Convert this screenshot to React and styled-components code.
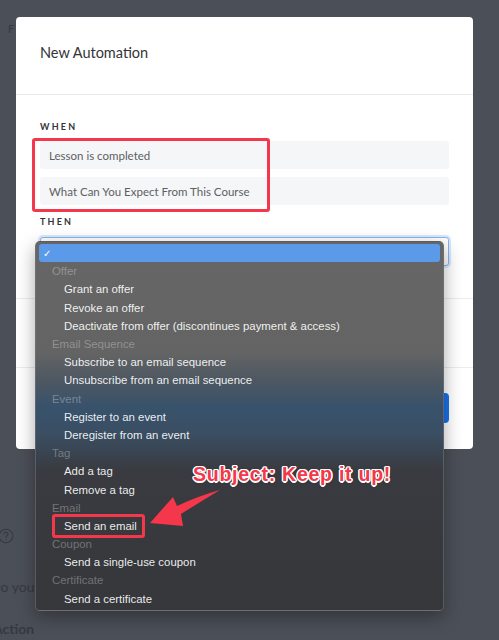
import styled, { createGlobalStyle } from 'styled-components';

const GlobalStyle = createGlobalStyle`
	html, body {
		margin: 0;
		padding: 0;
		background: #4b4f57;
	}
	* {
		box-sizing: border-box;
	}
`;

const Page = styled.div`
	position: relative;
	width: 499px;
	height: 640px;
	overflow: hidden;
	background: #4b4f57;
	font-family: 'Lato', 'Open Sans', sans-serif;
`;

// the course page behind the dimmed overlay
const BackdropPage = styled.div`
	display: flex;
	flex-direction: column;
	padding: 22px 0 0 8px;
	color: #363940;
`;

const BackdropTitle = styled.div`
	font-size: 11px;
	height: 14px;
`;

const HelpRow = styled.div`
	margin-top: 492px;
	margin-left: -10px;
	height: 16px;
`;

const BackdropText = styled.div`
	margin-top: 34px;
	margin-left: -18px;
	font-size: 14px;
	line-height: 18px;
`;

const BackdropHeading = styled.div`
	margin-top: 24px;
	margin-left: -15px;
	font-size: 14px;
	font-weight: 700;
`;

const Modal = styled.div`
	position: absolute;
	left: 16px;
	top: 17px;
	width: 457px;
	height: 432px;
	background: #ffffff;
	border-radius: 4px;
	display: flex;
	flex-direction: column;
	overflow: hidden;
`;

const ModalHeader = styled.div`
	height: 78px;
	padding: 26px 24px 0;
	border-bottom: 1px solid #e9e9ec;
`;

const ModalTitle = styled.h2`
	margin: 0;
	font-size: 14.5px;
	line-height: 20px;
	font-weight: 400;
	color: #333438;
`;

const ModalBody = styled.div`
	display: flex;
	flex-direction: column;
	padding: 26px 24px 32px;
	border-bottom: 1px solid #ececef;
`;

const FieldLabel = styled.div`
	font-size: 9px;
	line-height: 11px;
	font-weight: 700;
	letter-spacing: 2.2px;
	color: #333438;
	margin-bottom: ${(p) => p.$gap || 9}px;
	margin-top: ${(p) => p.$top || 0}px;
`;

const FieldBox = styled.div`
	height: 28px;
	background: #f5f6f8;
	border-radius: 3px;
	padding: 0 9px;
	display: flex;
	align-items: center;
	font-size: 11.5px;
	color: #5d5f63;
	margin-bottom: 8px;
`;

const SelectBox = styled.div`
	height: 29px;
	border: 1px solid #86b4f5;
	box-shadow: 0 0 0 2px #dbe8fc;
	border-radius: 3px;
	background: #ffffff;
`;

const ModalSection = styled.div`
	height: 69px;
	border-bottom: 1px solid #ececef;
`;

const ModalFooter = styled.div`
	display: flex;
	justify-content: flex-end;
	padding: 25px 24px;
`;

const PrimaryButton = styled.button`
	width: 96px;
	height: 30px;
	border: none;
	border-radius: 4px;
	background: #1a72ea;
	color: #fff;
	font-family: inherit;
	font-size: 12px;
`;

const Menu = styled.div`
	position: absolute;
	left: 35px;
	top: 241px;
	width: 409px;
	height: 370px;
	padding: 2px 3px 3px;
	border-radius: 5px;
	border: 1px solid rgba(120, 120, 125, 0.55);
	box-shadow: 0 6px 18px rgba(0, 0, 0, 0.35);
	background: linear-gradient(
		180deg,
		#666666 0%,
		#646464 30%,
		#4c5762 38%,
		#38526c 45%,
		#3a4e63 52%,
		#393b40 62%,
		#36373b 100%
	);
	font-family: 'Liberation Sans', Arial, sans-serif;
	font-size: 11.4px;
`;

const MenuRow = styled.div`
	height: 18.2px;
	display: flex;
	align-items: center;
	border-radius: 3px;
	padding-left: ${(p) => (p.$kind === 'item' ? 25 : p.$kind === 'group' ? 13 : 4)}px;
	color: ${(p) => (p.$kind === 'group' ? 'rgba(255,255,255,0.3)' : 'rgba(255,255,255,0.92)')};
	background: ${(p) => (p.$active ? '#5a9ae9' : 'transparent')};
	white-space: nowrap;
`;

const Check = styled.span`
	font-size: 10px;
	color: #fff;
`;

const HighlightBox = styled.div`
	position: absolute;
	left: ${(p) => p.$x}px;
	top: ${(p) => p.$y}px;
	width: ${(p) => p.$w}px;
	height: ${(p) => p.$h}px;
	border: 3px solid #f4374a;
	border-radius: 3px;
`;

const ArrowMark = styled.svg`
	position: absolute;
	left: 140px;
	top: 480px;
	overflow: visible;
`;

const Callout = styled.div`
	position: absolute;
	left: 193px;
	top: 463px;
	font-family: 'Liberation Sans', Arial, sans-serif;
	font-weight: 700;
	font-size: 19.5px;
	letter-spacing: 0.75px;
	color: #f4374a;
	white-space: nowrap;
	text-shadow: 1.5px 0 0 #fff, -1.5px 0 0 #fff, 0 1.5px 0 #fff, 0 -1.5px 0 #fff,
		1px 1px 0 #fff, -1px -1px 0 #fff, 1px -1px 0 #fff, -1px 1px 0 #fff,
		0 1px 3px rgba(0, 0, 0, 0.5);
`;

const menuGroups = [
	{ label: 'Offer', items: ['Grant an offer', 'Revoke an offer', 'Deactivate from offer (discontinues payment & access)'] },
	{ label: 'Email Sequence', items: ['Subscribe to an email sequence', 'Unsubscribe from an email sequence'] },
	{ label: 'Event', items: ['Register to an event', 'Deregister from an event'] },
	{ label: 'Tag', items: ['Add a tag', 'Remove a tag'] },
	{ label: 'Email', items: ['Send an email'] },
	{ label: 'Coupon', items: ['Send a single-use coupon'] },
	{ label: 'Certificate', items: ['Send a certificate'] },
];

const HelpIcon = () => (
	<svg width='16' height='16' viewBox='0 0 16 16'>
		<circle cx='8' cy='8' r='6.8' fill='none' stroke='#363940' strokeWidth='1.1' />
		<path d='M6 6.3a2 2 0 1 1 2.8 1.8c-.6.3-.8.6-.8 1.3' fill='none' stroke='#363940' strokeWidth='1.1' strokeLinecap='round' />
		<circle cx='8' cy='11.6' r='0.7' fill='#363940' />
	</svg>
);

const App = () => {
	return (
		<Page>
			<GlobalStyle />
			<BackdropPage>
				<BackdropTitle>F</BackdropTitle>
				<HelpRow>
					<HelpIcon />
				</HelpRow>
				<BackdropText>Do you s</BackdropText>
				<BackdropHeading>Action</BackdropHeading>
			</BackdropPage>

			<Modal>
				<ModalHeader>
					<ModalTitle>New Automation</ModalTitle>
				</ModalHeader>
				<ModalBody>
					<FieldLabel>WHEN</FieldLabel>
					<FieldBox>Lesson is completed</FieldBox>
					<FieldBox>What Can You Expect From This Course</FieldBox>
					<FieldLabel $top={3} $gap={10}>THEN</FieldLabel>
					<SelectBox />
				</ModalBody>
				<ModalSection />
				<ModalFooter>
					<PrimaryButton>Save</PrimaryButton>
				</ModalFooter>
			</Modal>

			<Menu>
				<MenuRow $active>
					<Check>✓</Check>
				</MenuRow>
				{menuGroups.map((group) => (
					<div key={group.label}>
						<MenuRow $kind='group'>{group.label}</MenuRow>
						{group.items.map((item) => (
							<MenuRow key={item} $kind='item'>
								{item}
							</MenuRow>
						))}
					</div>
				))}
			</Menu>

			<HighlightBox $x={32} $y={138} $w={238} $h={74} />
			<HighlightBox $x={52} $y={514} $w={93} $h={24} />
			<ArrowMark width='90' height='50' viewBox='0 0 90 50'>
				<path d='M10 43 L33 17 L37 26 Q58 16 80 10 Q60 22 41 34 L43 46 Z' fill='#f4374a' />
			</ArrowMark>
			<Callout>Subject: Keep it up!</Callout>
		</Page>
	);
};

export default App;
